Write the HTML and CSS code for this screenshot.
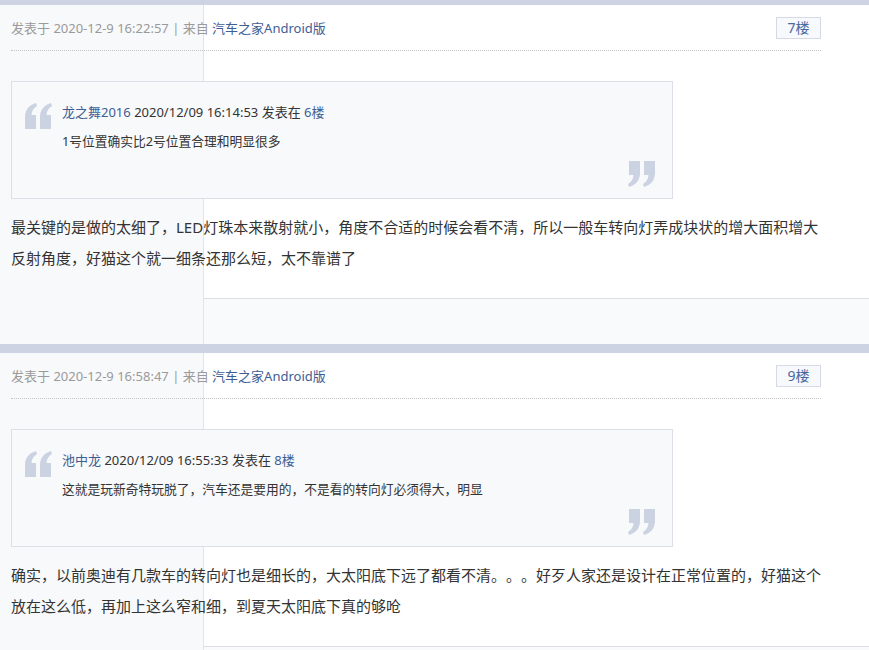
FILE: index.html
```html
<!DOCTYPE html>
<html lang="zh-CN">

<head>
    <meta charset="UTF-8">
    <meta name="viewport" content="width=device-width, initial-scale=1.0">
    <title>回复</title>
    <link rel="stylesheet" href="styles.css">
</head>

<body>
    <div class="reply-list">
        <div class="post">
            <div class="post-body">
                <div class="post-head">
                    <span class="meta">发表于 2020-12-9 16:22:57 | 来自 <a href="#">汽车之家Android版</a></span>
                    <span class="floor">7楼</span>
                </div>
                <div class="quote">
                    <svg class="qmark qmark-open" viewBox="0 0 27 26"><path d="M0 26V14C0 7 4 2 11 0L12 3C8.5 5 6.5 8.5 6.5 12H11V26Z"/><path d="M15 26V14C15 7 19 2 26 0L27 3C23.5 5 21.5 8.5 21.5 12H26V26Z"/></svg>
                    <div class="quote-head"><a href="#">龙之舞2016</a> 2020/12/09 16:14:53 发表在 <a href="#">6楼</a></div>
                    <div class="quote-text">1号位置确实比2号位置合理和明显很多</div>
                    <svg class="qmark qmark-close" viewBox="0 0 27 26"><g transform="rotate(180 13.5 13)"><path d="M0 26V14C0 7 4 2 11 0L12 3C8.5 5 6.5 8.5 6.5 12H11V26Z"/><path d="M15 26V14C15 7 19 2 26 0L27 3C23.5 5 21.5 8.5 21.5 12H26V26Z"/></g></svg>
                </div>
                <p class="post-text">最关键的是做的太细了，LED灯珠本来散射就小，角度不合适的时候会看不清，所以一般车转向灯弄成块状的增大面积增大反射角度，好猫这个就一细条还那么短，太不靠谱了</p>
            </div>
            <div class="post-foot"></div>
        </div>

        <div class="post">
            <div class="post-body">
                <div class="post-head">
                    <span class="meta">发表于 2020-12-9 16:58:47 | 来自 <a href="#">汽车之家Android版</a></span>
                    <span class="floor">9楼</span>
                </div>
                <div class="quote">
                    <svg class="qmark qmark-open" viewBox="0 0 27 26"><path d="M0 26V14C0 7 4 2 11 0L12 3C8.5 5 6.5 8.5 6.5 12H11V26Z"/><path d="M15 26V14C15 7 19 2 26 0L27 3C23.5 5 21.5 8.5 21.5 12H26V26Z"/></svg>
                    <div class="quote-head"><a href="#">池中龙</a> 2020/12/09 16:55:33 发表在 <a href="#">8楼</a></div>
                    <div class="quote-text">这就是玩新奇特玩脱了，汽车还是要用的，不是看的转向灯必须得大，明显</div>
                    <svg class="qmark qmark-close" viewBox="0 0 27 26"><g transform="rotate(180 13.5 13)"><path d="M0 26V14C0 7 4 2 11 0L12 3C8.5 5 6.5 8.5 6.5 12H11V26Z"/><path d="M15 26V14C15 7 19 2 26 0L27 3C23.5 5 21.5 8.5 21.5 12H26V26Z"/></g></svg>
                </div>
                <p class="post-text">确实，以前奥迪有几款车的转向灯也是细长的，大太阳底下远了都看不清。。。好歹人家还是设计在正常位置的，好猫这个放在这么低，再加上这么窄和细，到夏天太阳底下真的够呛</p>
            </div>
            <div class="post-foot"></div>
        </div>
    </div>
</body>

</html>
```

FILE: styles.css
```css
html, body {
    margin: 0;
    padding: 0;
    background: #fff;
    color: #333;
    font-family: "Noto Sans", "Noto Sans CJK SC", sans-serif;
    text-spacing-trim: space-all;
    overflow: hidden;
}

a {
    color: #3d5e95;
    text-decoration: none;
}

/* 页面已滚动，第一条的顶边只露出一半 */
.reply-list {
    margin-top: -4px;
}

.post {
    border-top: 9px solid #cdd3e3;
    background: linear-gradient(to right, #f8f9fb 0, #f8f9fb 203px, #e1e4ea 203px, #e1e4ea 204px, #fff 204px);
}

.post-body {
    box-sizing: border-box;
    width: 821px;
    height: 293px;
    padding-left: 11px;
}

.post-head {
    display: flex;
    justify-content: space-between;
    align-items: center;
    height: 45px;
    border-bottom: 1px dotted #c4c4c4;
}

.meta {
    font-size: 13px;
    color: #9a9a9a;
}

.floor {
    box-sizing: border-box;
    width: 45px;
    height: 22px;
    line-height: 20px;
    text-align: center;
    font-size: 14px;
    color: #4a68a0;
    background: #f8f9fc;
    border: 1px solid #d5dae5;
}

.quote {
    position: relative;
    box-sizing: border-box;
    width: 662px;
    height: 118px;
    margin-top: 30px;
    padding: 20px 0 0 50px;
    background: #f8f9fb;
    border: 1px solid #dcdfe6;
}

.quote-head {
    font-size: 13px;
    line-height: 20px;
    color: #333;
}

.quote-text {
    margin-top: 9px;
    font-size: 12.75px;
    line-height: 20px;
    color: #333;
}

.qmark {
    position: absolute;
    width: 27px;
    height: 26px;
    fill: #cbd2e1;
}

.qmark-open {
    left: 13px;
    top: 21px;
}

.qmark-close {
    right: 17px;
    bottom: 11px;
}

.post-text {
    width: 812px;
    margin: 13px 0 0;
    font-size: 15px;
    line-height: 31px;
    color: #333;
}

.post-foot {
    box-sizing: border-box;
    height: 46px;
    margin-left: 204px;
    background: #f9fafb;
    border-top: 1px solid #dcdde3;
}
```
